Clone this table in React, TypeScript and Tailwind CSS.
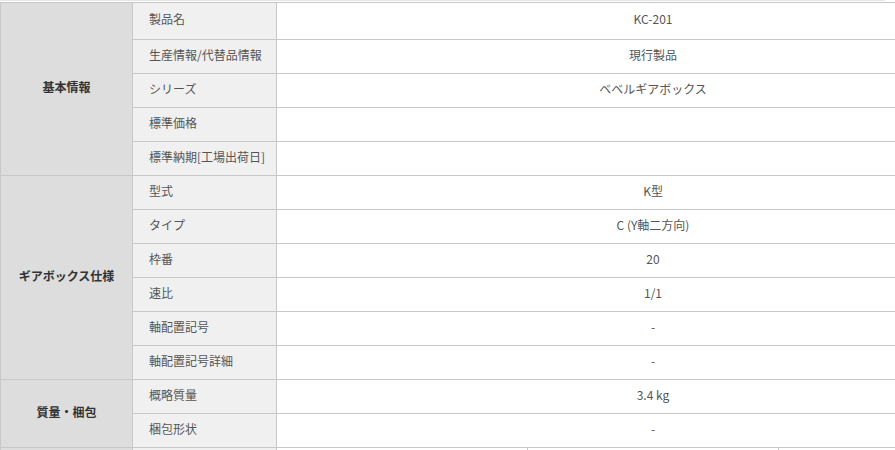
import React from 'react';

type Row = { label: string; value: string };
type Group = { title: string; rows: Row[] };

const groups: Group[] = [
    {
        title: '基本情報',
        rows: [
            { label: '製品名', value: 'KC-201' },
            { label: '生産情報/代替品情報', value: '現行製品' },
            { label: 'シリーズ', value: 'ベベルギアボックス' },
            { label: '標準価格', value: '' },
            { label: '標準納期[工場出荷日]', value: '' },
        ],
    },
    {
        title: 'ギアボックス仕様',
        rows: [
            { label: '型式', value: 'K型' },
            { label: 'タイプ', value: 'C (Y軸二方向)' },
            { label: '枠番', value: '20' },
            { label: '速比', value: '1/1' },
            { label: '軸配置記号', value: '-' },
            { label: '軸配置記号詳細', value: '-' },
        ],
    },
    {
        title: '質量・梱包',
        rows: [
            { label: '概略質量', value: '3.4 kg' },
            { label: '梱包形状', value: '-' },
        ],
    },
];

export default function App() {
    return (
        <div className="w-[895px] h-[450px] overflow-hidden bg-white text-[12px] font-['Noto_Sans_CJK_JP','Noto_Sans',sans-serif]">
            {/* faint edge of the element above */}
            <div className="h-px w-[885px] bg-[#e6e6e6]" />
            <table className="mt-px w-[1029px] table-fixed border-collapse border border-[#c8c8c8]">
                <colgroup>
                    <col className="w-[132px]" />
                    <col className="w-[144px]" />
                    <col className="w-[251px]" />
                    <col className="w-[251px]" />
                    <col className="w-[251px]" />
                </colgroup>
                <tbody>
                    {groups.map((g, gi) =>
                        g.rows.map((r, ri) => (
                            <tr key={`${gi}-${ri}`} className={gi === 0 && ri === 0 ? 'h-[37px]' : 'h-[34px]'}>
                                {ri === 0 && (
                                    <th
                                        rowSpan={g.rows.length}
                                        className="border border-[#c8c8c8] bg-[#dddddd] pb-1 text-center font-bold text-[#333333]"
                                    >
                                        {g.title}
                                    </th>
                                )}
                                <th className="border border-[#c8c8c8] bg-[#f0f0f0] pl-4 pb-1 text-left font-normal text-[#555555]">
                                    {r.label}
                                </th>
                                <td colSpan={3} className="border border-[#c8c8c8] pb-1 text-center text-[#555555]">
                                    {r.value}
                                </td>
                            </tr>
                        ))
                    )}
                    <tr className="h-[34px]">
                        <th className="border border-[#c8c8c8] bg-[#dddddd]" />
                        <th className="border border-[#c8c8c8] bg-[#f0f0f0]" />
                        <td className="border border-[#c8c8c8]" />
                        <td className="border border-[#c8c8c8]" />
                        <td className="border border-[#c8c8c8]" />
                    </tr>
                </tbody>
            </table>
        </div>
    );
}
